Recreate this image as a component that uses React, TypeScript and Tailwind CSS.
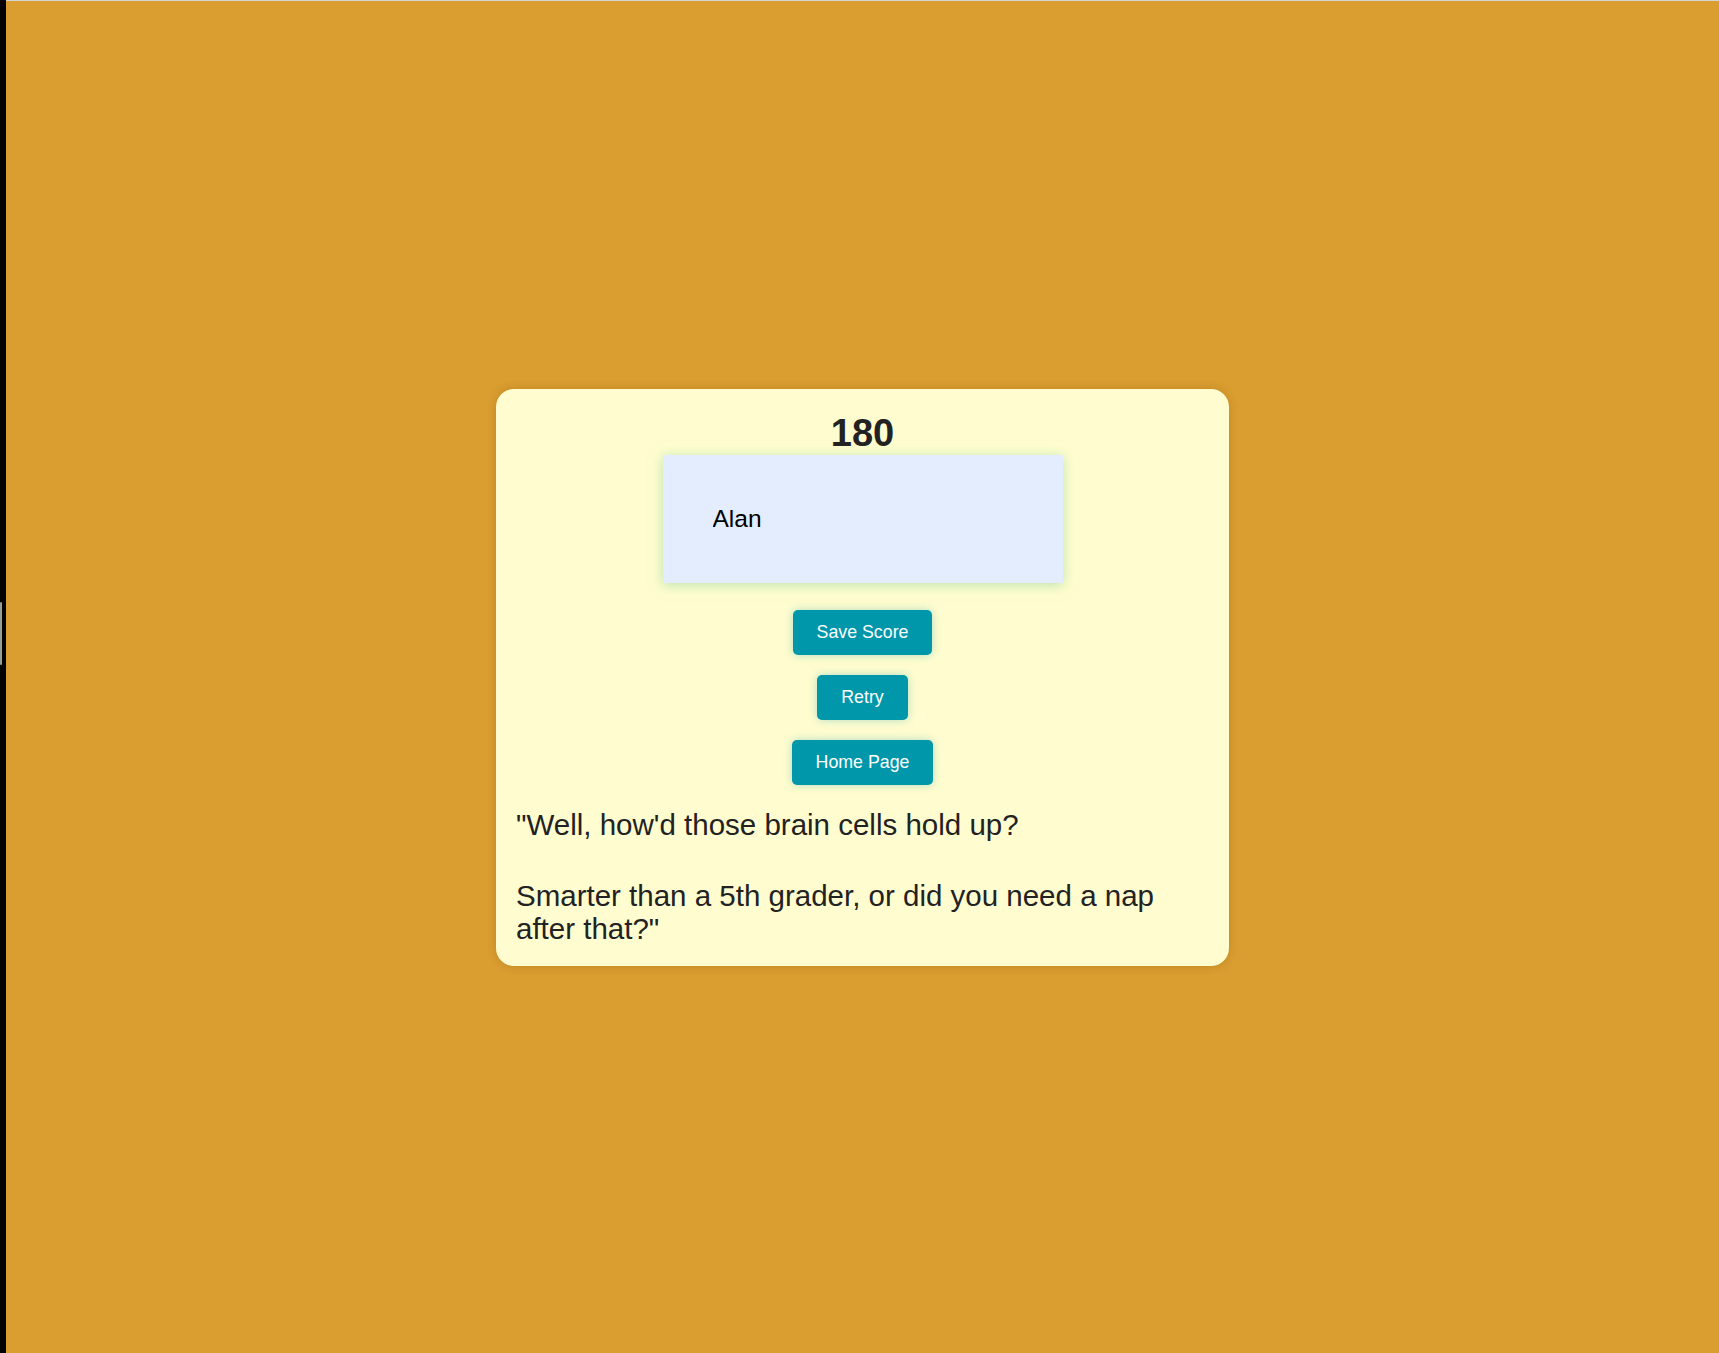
import React from "react";

const buttons = ["Save Score", "Retry", "Home Page"];

export default function App() {
  return (
    <div className="flex h-[1353px] w-full bg-black font-['Liberation_Sans',Arial,sans-serif]">
      {/* left window edge with scroll thumb */}
      <div className="flex w-[6px] shrink-0 flex-col">
        <div className="mt-[602px] h-[63px] w-[2px] rounded-full bg-[#9a9a9a]" />
      </div>

      <main className="flex flex-1 items-center justify-center border-t border-[#d4d4d4] bg-[#d99d30]">
        <div className="flex w-[733px] flex-col items-center rounded-[18px] bg-[#fffdcf] px-[20px] pt-[23px] pb-[21px] shadow-[0_0_8px_rgba(120,70,0,0.25)]">
          <h1 className="text-[38px] leading-[43px] font-bold text-[#222]">180</h1>

          <input
            defaultValue="Alan"
            className="h-[128px] w-[400px] bg-[#e3edfe] pl-[50px] text-[24.5px] text-black outline-none shadow-[0_2px_12px_rgba(130,205,150,0.55)]"
          />

          <div className="mt-[27px] flex flex-col items-center gap-[20px]">
            {buttons.map((label) => (
              <button
                key={label}
                className="h-[45px] rounded-[5px] bg-[#0097ab] px-[24px] text-[17.8px] text-white shadow-[0_0_10px_rgba(0,150,170,0.3)]"
              >
                {label}
              </button>
            ))}
          </div>

          <p className="mt-[23px] w-full text-[29.5px] leading-[33px] text-[#222]">
            "Well, how'd those brain cells hold up?
          </p>
          <p className="mt-[38px] w-full text-[29.5px] leading-[33px] text-[#222]">
            Smarter than a 5th grader, or did you need a nap after that?"
          </p>
        </div>
      </main>
    </div>
  );
}
